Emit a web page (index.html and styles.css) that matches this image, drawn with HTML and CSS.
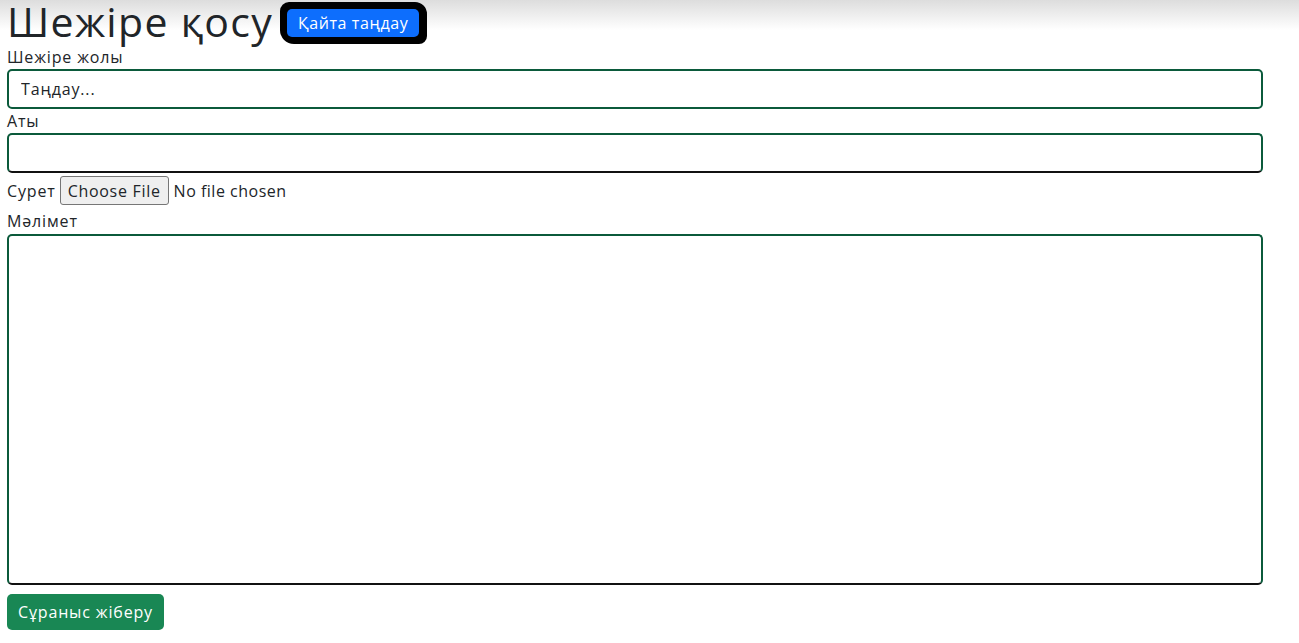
FILE: index.html
```html
<!DOCTYPE html>
<html lang="kk">
<head>
  <meta charset="UTF-8" />
  <meta name="viewport" content="width=device-width, initial-scale=1.0"/>
  <title>Шежіре қосу</title>
  <link rel="stylesheet" href="styles.css">
</head>
<body>
  <div class="page">
    <div class="title-row">
      <h1>Шежіре қосу</h1>
      <span class="marker">
        <a href="#" class="btn btn-blue">Қайта таңдау</a>
      </span>
    </div>

    <form class="add-form">
      <label for="line">Шежіре жолы</label>
      <select id="line" class="field field-select">
        <option>Таңдау...</option>
      </select>

      <label for="name">Аты</label>
      <input id="name" type="text" class="field field-dark">

      <div class="file-row">
        <label for="photo">Сурет</label>
        <input id="photo" type="file" class="file-input">
      </div>

      <label for="info">Мәлімет</label>
      <textarea id="info" class="field field-dark field-area"></textarea>

      <button type="submit" class="btn btn-green">Сұраныс жіберу</button>
    </form>
  </div>
</body>
</html>
```

FILE: styles.css
```css
body {
  margin: 0;
  font-family: "Open Sans", "Noto Sans", sans-serif;
  letter-spacing: 0.85px;
  color: #212529;
  background: linear-gradient(#dddddd, #ffffff 30px) no-repeat;
  background-color: #fff;
}
.page {
  padding: 0 7px;
}
.title-row {
  display: flex;
  align-items: center;
  height: 45px;
}
h1 {
  margin: -3px 0 0;
  font-size: 41px;
  font-weight: 400;
  line-height: 45px;
  letter-spacing: 1.3px;
}
.marker {
  display: inline-block;
  margin-left: 7px;
  padding: 7px 8px 7px 7px;
  background: #000;
  border-radius: 9px 12px 8px 14px;
}
.btn {
  display: inline-block;
  border: 0;
  border-radius: 5px;
  color: #fff;
  text-decoration: none;
  font-family: inherit;
  letter-spacing: inherit;
  cursor: pointer;
}
.btn-blue {
  background: #0d6efd;
  font-size: 16px;
  line-height: 28px;
  padding: 0 11px;
  letter-spacing: 0.6px;
}
.add-form {
  display: flex;
  flex-direction: column;
  align-items: flex-start;
}
.add-form label {
  font-size: 16px;
  line-height: 24px;
}
.field {
  box-sizing: border-box;
  width: 1256px;
  height: 40px;
  border: 2px solid #0b5a3b;
  border-radius: 5px;
  font-family: inherit;
  letter-spacing: inherit;
  font-size: 16px;
  color: #212529;
  background: #fff;
  margin: 0;
}
.field-select {
  appearance: none;
  padding: 0 36px 0 12px;
}
.field-dark {
  border-bottom-color: #111;
}
.file-row {
  display: flex;
  align-items: center;
  gap: 4px;
  height: 37px;
  margin-top: -1px;
}
.file-input {
  font-family: inherit;
  letter-spacing: 0.5px;
  font-size: 16px;
  color: #212529;
}
.file-input::file-selector-button {
  font-family: inherit;
  letter-spacing: 0.7px;
  font-size: 16px;
  height: 29px;
  padding: 0 7px;
  margin-right: 5px;
  border: 1px solid #767676;
  border-radius: 3px;
  background: #efefef;
  color: #212529;
}
.field-area {
  height: 351px;
  margin-top: 1px;
  resize: none;
}
.btn-green {
  margin-top: 9px;
  background: #198754;
  font-size: 16px;
  line-height: 36px;
  padding: 0 11px;
}
```
